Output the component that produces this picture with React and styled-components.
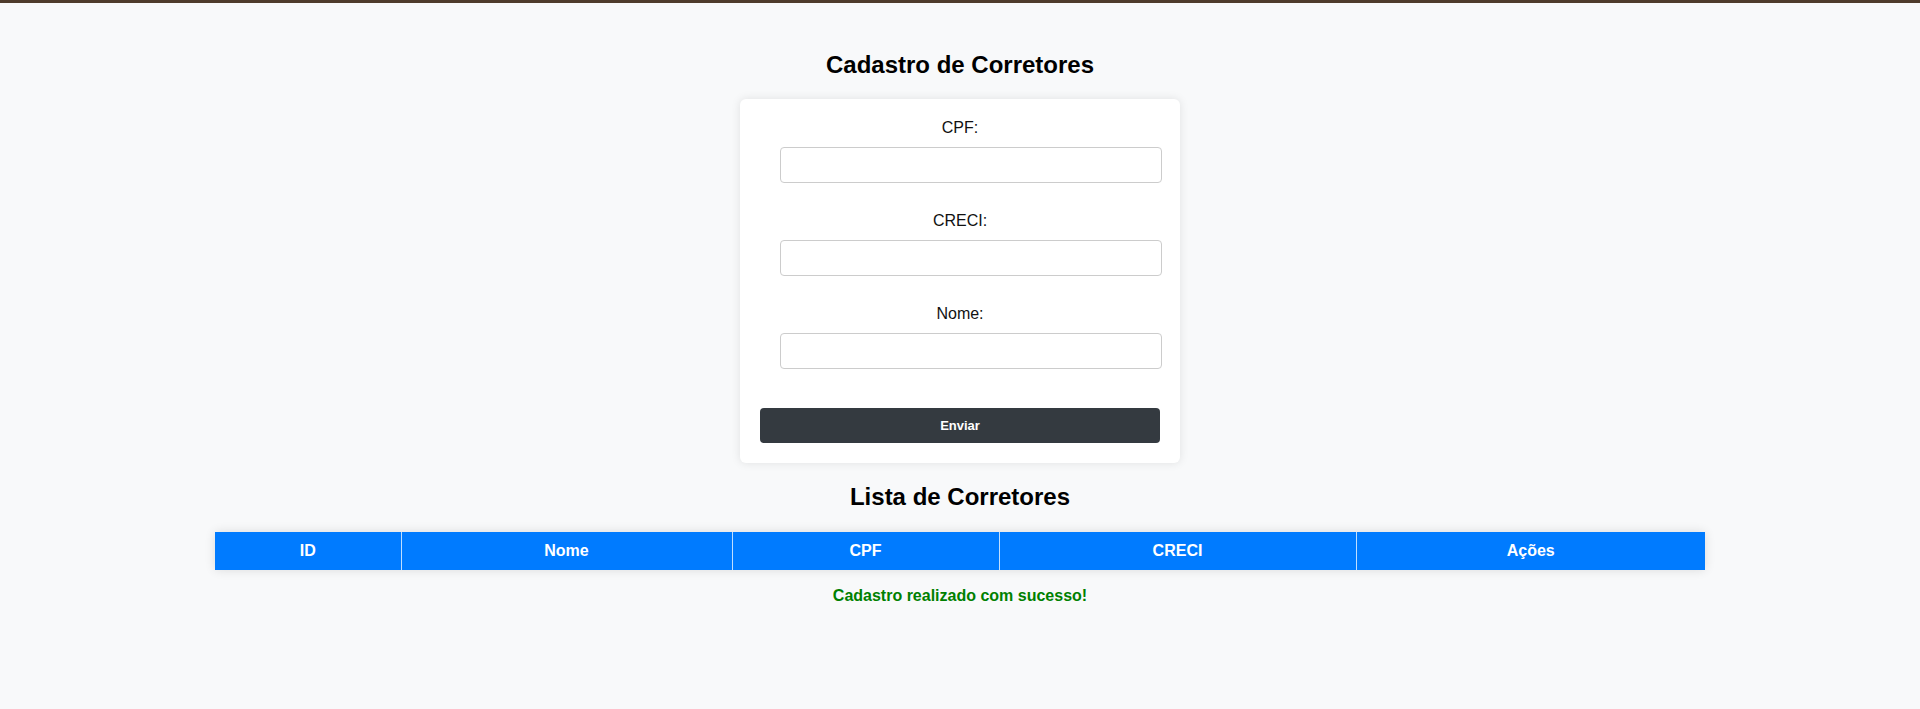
import React from "react";
import styled, { createGlobalStyle } from "styled-components";

const GlobalStyle = createGlobalStyle`
  html, body {
    margin: 0;
    padding: 0;
    background: #f8f9fa;
    font-family: "Liberation Sans", Arial, sans-serif;
  }
  * { box-sizing: border-box; }
`;

const TopBar = styled.div`
  height: 3px;
  background: #4e3b2b;
`;

const Page = styled.main`
  display: flex;
  flex-direction: column;
  align-items: center;
  padding-bottom: 40px;
`;

const Title = styled.h2`
  margin: ${(p) => (p.$first ? "48px" : "20px")} 0 ${(p) => (p.$first ? "20px" : "21px")};
  font-size: 24px;
  line-height: 28px;
  font-weight: bold;
  color: #000;
  text-align: center;
`;

const Card = styled.form`
  width: 440px;
  padding: 20px;
  background: #fff;
  border-radius: 6px;
  box-shadow: 0 0 10px rgba(0, 0, 0, 0.1);
`;

const FormGroup = styled.div`
  margin-bottom: 29px;
`;

const Label = styled.label`
  display: block;
  text-align: center;
  font-size: 16px;
  line-height: 18px;
  color: #111;
  margin-bottom: 10px;
`;

const Input = styled.input`
  display: block;
  width: 382px;
  height: 36px;
  margin-left: 20px;
  padding: 0 10px;
  border: 1px solid #ccc;
  border-radius: 4px;
  background: #fff;
  font-family: inherit;
  font-size: 14px;
`;

const SubmitButton = styled.button`
  display: block;
  width: 100%;
  height: 35px;
  margin-top: 39px;
  border: none;
  border-radius: 4px;
  background: #343a40;
  color: #fff;
  font-family: inherit;
  font-size: 13px;
  font-weight: bold;
  cursor: pointer;
`;

const Table = styled.table`
  width: 1490px;
  border-collapse: collapse;
  table-layout: fixed;
  box-shadow: 0 0 10px rgba(0, 0, 0, 0.12);
`;

const Th = styled.th`
  width: ${(p) => p.$w}px;
  height: 38px;
  padding: 0;
  background: #007bff;
  color: #fff;
  font-size: 16px;
  font-weight: bold;
  text-align: center;
  & + & {
    border-left: 1px solid rgba(255, 255, 255, 0.75);
  }
`;

const Success = styled.p`
  margin: 17px 0 0;
  font-size: 16px;
  line-height: 18px;
  font-weight: bold;
  color: #008000;
  text-align: center;
`;

const fields = ["CPF", "CRECI", "Nome"];
const columns = [
  { label: "ID", w: 186 },
  { label: "Nome", w: 331 },
  { label: "CPF", w: 267 },
  { label: "CRECI", w: 357 },
  { label: "Ações", w: 349 },
];

export default function App() {
  return (
    <>
      <GlobalStyle />
      <TopBar />
      <Page>
        <Title $first>Cadastro de Corretores</Title>
        <Card onSubmit={(e) => e.preventDefault()}>
          {fields.map((f) => (
            <FormGroup key={f}>
              <Label htmlFor={f}>{f}:</Label>
              <Input id={f} type="text" />
            </FormGroup>
          ))}
          <SubmitButton type="submit">Enviar</SubmitButton>
        </Card>
        <Title>Lista de Corretores</Title>
        <Table>
          <thead>
            <tr>
              {columns.map((c) => (
                <Th key={c.label} $w={c.w}>
                  {c.label}
                </Th>
              ))}
            </tr>
          </thead>
          <tbody />
        </Table>
        <Success>Cadastro realizado com sucesso!</Success>
      </Page>
    </>
  );
}
